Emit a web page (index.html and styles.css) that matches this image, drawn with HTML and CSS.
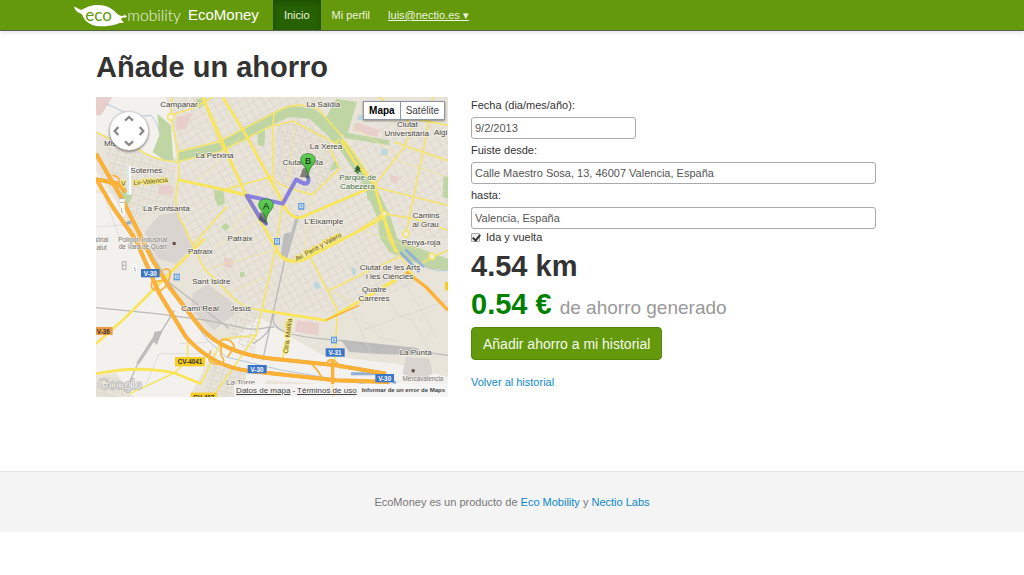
FILE: index.html
```html
<!DOCTYPE html>
<html lang="es">
<head>
<meta charset="utf-8">
<meta name="viewport" content="width=device-width, initial-scale=1">
<title>EcoMoney</title>
<link rel="stylesheet" href="styles.css">
</head>
<body>
<header class="navbar">
  <a class="brand" href="#">
    <svg class="logo" viewBox="0 0 330 84" role="img" aria-label="eco mobility">
      <path class="leaf" d="M0 17C6 17 12 23 22 27C36 20 48 12 72 12C102 12 116 25 128 37C136 45 143 46 151 44L151 49C145 49 141 52 142 57L150 65L137 66C122 73 102 76 78 76C48 74 30 59 25 41C17 35 4 32 0 17Z"/>
      <text class="logo-eco" x="34" y="59">eco</text>
      <text class="logo-mobility" x="160" y="59">mobility</text>
      <path class="logo-dash" d="M146 46H158M152 41V51"/>
    </svg>
    <span>EcoMoney</span>
  </a>
  <nav class="nav">
    <a class="nav-link active" href="#">Inicio</a>
    <a class="nav-link" href="#">Mi perfil</a>
    <a class="nav-link account" href="#">luis@nectio.es ▾</a>
  </nav>
</header>

<main class="container">
  <h1 class="title">Añade un ahorro</h1>
  <div class="columns">
    <section class="map" aria-label="Mapa de la ruta">
      <svg class="map-canvas" viewBox="0 0 1056 900">
        <defs>
          <pattern id="streets" width="44" height="44" patternUnits="userSpaceOnUse" patternTransform="rotate(-30)">
            <path class="street" d="M0 6H44M0 29H44M8 0V44M32 0V44"/>
          </pattern>
          <pattern id="streets-dense" width="25" height="25" patternUnits="userSpaceOnUse" patternTransform="rotate(15)">
            <path class="street" d="M0 4H25M0 16H14M6 0V25M19 0V16"/>
          </pattern>
          <linearGradient id="pin-fill" x1="0" y1="0" x2="0" y2="1">
            <stop offset="0" stop-color="#63cf58"/><stop offset="1" stop-color="#36a82f"/>
          </linearGradient>
          <g id="pin">
            <path class="pin" d="M0 0C-1-28-8-34-16-44C-30-63-17-76 0-76C17-76 30-63 16-44C8-34 1-28 0 0Z"/>
          </g>
          <g id="station">
            <rect class="station" x="-9" y="-10" width="18" height="20"/>
            <path class="station-mark" d="M-5-6H5V4H-5ZM-5-1H5M-4 7L-2 4M4 7L2 4"/>
          </g>
        </defs>
        <rect class="land" width="1056" height="900"/>
        <path class="urban" d="M210 0H1056V840L900 800L680 775L550 700L490 660L400 735L330 720L260 630L200 520L120 410L85 270L0 130V105L110 150L205 190L240 180L225 60Z"/>
        <path class="urban" d="M0 105L150 190L245 200L240 370L290 445L200 520L110 420L60 310L0 220Z"/>
        <path class="urban" d="M340 785L455 815L440 900H280ZM0 835L60 828L110 900H0ZM510 850L660 860V900H500Z"/>
        <path class="street-fill" d="M245 200L380 160L540 70L640 45L730 140L860 350L960 560L720 650L500 640L400 600L290 450L245 340Z"/>
        <path class="street-fill" d="M250 0H710L640 30L540 45L430 115L245 170L225 60ZM750 130L900 70L1056 90V430L920 410L850 320Z"/>
        <path class="street-dense" d="M545 80L610 65L690 120L735 210L650 290L570 270L535 235Z"/>
        <path class="street-dense" d="M20 110L160 180L235 205L240 340L110 360L55 280ZM390 610L500 645L470 790L410 720ZM350 800L450 820L435 900H320ZM0 845L60 835L100 900H0Z"/>
        <path class="industry" d="M190 355L245 345L275 420L290 450L240 500L185 485L145 405ZM335 560L395 605L430 640L355 700L285 640L290 590ZM930 780L1000 785L1010 830L965 855L920 830Z"/>
        <path class="hospital" d="M603 670L670 678L668 715L598 704ZM240 60L290 48L270 95L242 100ZM0 0H50L15 55H0ZM384 480L415 490L405 515L383 508ZM188 265H230V293H188ZM780 75L850 100L845 120L770 100ZM885 235L910 240L900 262L880 250Z"/>
        <path class="water-line" d="M30 20C80 40 100 65 165 55C205 100 180 140 235 190M75 275L100 350L215 550L260 620L330 725L390 780L560 820L830 865"/>
        <path class="park" d="M184 50L225 85L232 190H205L170 165L190 115ZM245 165L370 137L450 87L538 43L580 25L655 35L705 75L745 130L785 190L835 260L880 350L905 425L960 450L1056 485V520L1000 515L940 490L880 465L850 420L845 365L800 260L740 170L690 110L640 65L580 60L515 90L450 128L370 165L245 192Z"/>
        <path class="park" d="M720 5L783 15L752 120L715 100L680 80ZM740 105L880 130V145L745 123ZM355 278L382 282L387 320L365 327L355 300ZM390 377L402 390L388 403L374 390ZM485 105L508 100L505 148L485 145ZM715 190L730 210L700 225ZM1042 240L1056 236V305L1040 300ZM75 280L110 295L95 325L78 320ZM810 270L835 275L840 315L815 310ZM432 525H445V540H432ZM300 5H340L310 35Z"/>
        <path class="pool" d="M650 560L663 553L675 570L660 578ZM765 510L778 512L780 530L770 535ZM785 55H800V70H785ZM855 155H875V175H855Z"/>
        <path class="rail-yard" d="M564 410L585 405L570 480H553ZM735 728L960 752L1000 775L860 772L760 765ZM175 705L200 700L182 745L170 730Z"/>
        <path class="rail-wide" d="M605 355L568 487M180 715L125 800"/>
        <path class="rail" d="M568 480L500 790M0 632L180 650L335 670L450 695C500 700 500 690 535 690M210 550L400 695M535 650C515 700 580 720 730 730L1056 775M470 740Q525 710 526 670M235 640L180 730M125 800L90 880"/>
        <path class="lane" d="M0 285H75M30 310L70 420M0 390L120 380M190 770H355M190 770L150 860M250 740L350 735M880 610L900 650L950 670L1010 780M780 640L850 720L910 735M800 700L1056 610M750 600L830 780M930 560L1020 720"/>
        <path class="road" d="M0 105L40 125M125 155Q170 190 240 195L370 165L520 90L590 72L730 145M228 0L225 60L245 160L250 240Q225 330 260 380L290 445L325 515L420 610Q450 635 500 640L690 670L720 655L890 550L1010 480L1056 460M225 55L300 30L350 0M245 165L370 133L540 45Q600 10 665 35L740 120M450 295L395 275L530 238M245 248L340 268L450 295M290 445L393 328M320 5L375 140L450 295L540 455Q560 510 620 490M380 0L450 112L560 315Q580 365 610 362L840 265M535 50L530 80L532 240Q530 265 650 293L730 215L700 150M740 125L790 190L835 265L880 430L915 480L960 545M560 315L540 450L480 715L350 900M730 125L705 160M850 0L950 85L925 150L835 265M1010 0L990 120L930 410M905 55L1056 85M895 135L1056 190M835 270L1056 325M860 350L955 365L1056 400M640 475L780 405L860 350M640 475L725 640L715 800M700 580L830 515L910 480M0 830Q130 800 235 828L315 860L380 725L480 715M235 828L100 890M275 720V790L235 828M560 785L590 660"/>
        <path class="main-road" d="M245 248L370 275L450 295L540 455Q560 500 620 490L840 375L870 350M380 0L450 115L560 315Q580 370 620 360L840 265L780 200L735 130M320 0L450 295M0 740L80 670L180 570L325 425M835 265L860 350L900 465M500 640L690 670L900 550M0 830Q130 805 235 828L315 860"/>
        <path class="road-thin" d="M430 120L350 215L300 250M520 245L400 405M650 290L620 485M800 400L960 455M700 580L780 620M900 30L1056 25M925 150L1056 195M860 175L1056 240M770 90L900 170M360 450L500 365M320 520L550 455M370 600L510 540M650 100L735 215M600 70L575 260M100 200L80 250L0 282"/>
        <path class="canal" d="M912 465L970 525M928 458L985 510M90 380L105 375M765 830L840 830L900 858"/>
        <path class="water-line" d="M960 490L1000 515Q1030 525 1056 520"/>
        <path class="motorway-edge" d="M0 170L75 300L170 490L220 570L300 675Q370 770 530 785L720 805L870 830M0 245L50 330L120 430L190 590L270 720Q350 810 460 822L720 850L880 855M0 247L65 260L90 285"/>
        <path class="motorway" d="M0 170L75 300L170 490L220 570L300 675Q370 770 530 785L720 805L870 830M0 245L50 330L120 430L190 590L270 720Q350 810 460 822L720 850L880 855M0 247L65 260L90 285M710 900V790"/>
        <path class="junction" d="M200 520Q230 505 220 545Q205 585 185 580Q160 580 168 555L200 550M345 760Q325 800 365 802Q395 800 375 775L375 730Q405 720 415 750L395 780M50 235Q80 240 65 270L40 260M690 800Q710 770 735 815M640 795Q670 820 680 850"/>
        <path class="junction" d="M690 670L790 625"/>
        <path class="motorway" d="M930 525L990 570L1056 640"/>
        <circle class="roundabout" cx="225" cy="60" r="10"/><circle class="roundabout" cx="930" cy="411" r="9"/><circle class="roundabout" cx="865" cy="350" r="7"/><circle class="roundabout" cx="1008" cy="478" r="9"/>
        <path class="route" d="M510 380L490 360L452 296L560 320L600 248L625 260Q642 260 636 240"/>

        <g class="places">
          <text x="249" y="31">Campanar</text><text x="682" y="29">La Saïdia</text>
          <text x="934" y="91">Ciutat</text><text x="932" y="118">Universitària</text><text x="1034" y="113">Algi</text>
          <text x="690" y="157">La Xerea</text><text x="356" y="184">La Petxina</text>
          <text x="620" y="204">Ciutat Vella</text><text x="62" y="146">Mislata</text>
          <text x="151" y="229">Soternes</text><text x="211" y="341">La Fontsanta</text>
          <text x="683" y="380">L'Eixample</text><text x="432" y="433">Patraix</text><text x="313" y="470">Patraix</text>
          <text x="990" y="363">Camins</text><text x="989" y="391">al Grau</text><text x="975" y="444">Penya-roja</text>
          <text x="346" y="561">Sant Isidre</text><text x="312" y="643">Cami Real</text><text x="434" y="643">Jesús</text>
          <text x="882" y="518">Ciutat de les Arts</text><text x="881" y="545">i les Ciències</text>
          <text x="835" y="584">Quatre</text><text x="834" y="612">Carreres</text><text x="959" y="775">La Punta</text>
          <text class="faint" x="434" y="864">La Torre</text>
        </g>
        <g class="places park-name"><text x="785" y="249">Parque de</text><text x="784" y="276">Cabezera</text></g>
        <path class="tree" d="M785 204L776 216H780L774 224H796L790 216H794ZM782 223H788V229H782Z"/>
        <g class="small-places">
          <text x="140" y="434">Polígon Industrial</text><text x="140" y="456">de Vara de Quart</text>
          <text x="17" y="436">strial</text><text x="17" y="458">alut</text><text x="981" y="852">Mercavalencia</text>
        </g>
        <path class="dot" d="M230 435H239V444H230ZM947 817H956V826H947Z"/>
        <g class="road-names">
          <text x="76" y="266">V</text><text transform="translate(113 264) rotate(-5)">Lv-Valencia</text>
          <text transform="translate(602 493) rotate(-29)">Av. Peris y Valero</text>
          <text transform="translate(575 770) rotate(-83)">Ctra. Malilla</text>
        </g>
        <g class="shields">
          <rect x="135" y="516" width="56" height="25"/><text x="163" y="536">V-30</text>
          <rect x="689" y="754" width="57" height="25"/><text x="717" y="774">V-31</text>
          <rect x="455" y="804" width="57" height="25"/><text x="483" y="824">V-30</text>
          <rect x="838" y="831" width="56" height="25"/><text x="866" y="851">V-30</text>
        </g>
        <g class="shields local">
          <rect x="237" y="780" width="90" height="28"/><text x="282" y="802">CV-4041</text>
          <rect x="284" y="887" width="78" height="28"/><text x="323" y="909">CV-407</text>
          <rect x="1047" y="555" width="20" height="25"/>
          <rect class="regional" x="-12" y="690" width="62" height="24"/><text x="22" y="710">V-36</text>
        </g>
        <use href="#station" x="616" y="328"/><use href="#station" x="543" y="433"/><use href="#station" x="242" y="540"/><use href="#station" x="714" y="729"/>
        <path class="pin-shadow" d="M510 380L488 370L492 345L508 352ZM634 242L612 240L620 215L634 210Z"/>
        <use href="#pin" x="510" y="382"/><use href="#pin" x="636" y="246"/>
        <g class="pin-letters"><text x="510" y="337">A</text><text x="636" y="202">B</text></g>
        <path class="control-piece" d="M94 207H105V293H94ZM72 304H86V357L74 350ZM110 500H123V525L112 512Z"/>
        <path class="control-tint" d="M92 207H99V293H92Z"/>
        <path class="control-line" d="M72 305H85M72 316H85M77 332V344L83 349M79 494H90V517H79ZM81 505H88M115 510L119 522"/>
        <text class="google" x="6" y="876">Google</text>
      </svg>

      <div class="pan">
        <svg viewBox="0 0 120 120" aria-hidden="true">
          <circle class="pan-disc" cx="60" cy="60" r="58"/>
          <path class="pan-arrows" d="M48 29L60 18L72 29M48 91L60 102L72 91M28 48L17 60L28 72M92 48L103 60L92 72"/>
        </svg>
      </div>
      <div class="map-types">
        <button class="map-type selected" type="button">Mapa</button>
        <button class="map-type" type="button">Satélite</button>
      </div>
      <div class="map-legal">
        <a href="#">Datos de mapa</a><span>-</span><a href="#">Términos de uso</a>
        <a class="report" href="#">Informar de un error de Maps</a>
      </div>
    </section>

    <form class="trip">
      <label for="date">Fecha (dia/mes/año):</label>
      <input class="field short" id="date" type="text" value="9/2/2013">
      <label for="from">Fuiste desde:</label>
      <input class="field" id="from" type="text" value="Calle Maestro Sosa, 13, 46007 Valencia, España">
      <label for="to">hasta:</label>
      <input class="field" id="to" type="text" value="Valencia, España">
      <div class="check">
        <input class="tick" id="round" type="checkbox" checked>
        <label for="round">Ida y vuelta</label>
      </div>
      <h2 class="figure">4.54 km</h2>
      <h2 class="figure saving">0.54 € <small>de ahorro generado</small></h2>
      <button class="submit" type="button">Añadir ahorro a mi historial</button>
      <a class="link back" href="#">Volver al historial</a>
    </form>
  </div>
</main>

<footer class="footer">
  <p>EcoMoney es un producto de <a class="link" href="#">Eco Mobility</a> y <a class="link" href="#">Nectio Labs</a></p>
</footer>
</body>
</html>
```
FILE: styles.css
```css
* { box-sizing: border-box; }

body {
  margin: 0;
  background: #fff;
  color: #333;
  font: 11px/16px "Liberation Sans", Arial, sans-serif;
}

.navbar {
  display: flex;
  height: 31px;
  padding-left: 74px;
  background: #64990b;
  border-bottom: 1px solid #56624a;
  box-shadow: 0 1px 5px rgba(0, 0, 0, .15);
}

.brand {
  display: flex;
  align-items: center;
  gap: 4px;
  padding-right: 14px;
  color: #fff;
  font-size: 15px;
  text-decoration: none;
}

.logo { width: 110px; height: 28px; }
.leaf { fill: #fff; }
.logo-eco { fill: #64990b; font: 51px Lato, sans-serif; }
.logo-mobility { fill: #f3f8e9; font: 300 47px Lato, sans-serif; }
.logo-dash { stroke: #fff; stroke-width: 4; }

.nav { display: flex; }

.nav-link {
  display: flex;
  align-items: center;
  padding: 0 11px;
  color: #edf4df;
  text-decoration: none;
}

.nav-link.active {
  background: #266203;
  box-shadow: inset 0 2px 6px rgba(0, 0, 0, .25);
}

.account { padding-left: 7px; text-decoration: underline; }

.container {
  max-width: 832px;
  margin: 0 auto;
  padding-top: 18px;
}

.title {
  margin: 0 0 12px;
  font-size: 29px;
  line-height: 36px;
}

.columns {
  display: grid;
  grid-template-columns: 352fr 457fr;
  gap: 23px;
  align-items: start;
}

.map { position: relative; overflow: hidden; }
.map-canvas { display: block; width: 100%; }

.land { fill: #f3f1ed; }
.urban { fill: #e9e4da; }
.street-fill { fill: url(#streets); }
.street-dense { fill: url(#streets-dense); }
.street { fill: none; stroke: #d8d2c8; stroke-width: 2; }
.industry { fill: #d9d4cf; }
.hospital { fill: #e9cfcb; }
.park { fill: #bfd6a4; }
.pool { fill: #bcd8dc; }
.water-line { fill: none; stroke: #b4c8dc; stroke-width: 3; }
.canal { fill: none; stroke: #91b1d3; stroke-width: 9; }
.rail-yard { fill: #bdbdbd; }
.rail-wide { fill: none; stroke: #bdbdbd; stroke-width: 10; }
.rail { fill: none; stroke: #bababa; stroke-width: 4; }
.lane { fill: none; stroke: #d6d3ce; stroke-width: 2; }
.road { fill: none; stroke: #f4e46e; stroke-width: 5; stroke-linejoin: round; }
.road-thin { fill: none; stroke: #f1e68f; stroke-width: 2; }
.main-road { fill: none; stroke: #f8e559; stroke-width: 8; stroke-linejoin: round; }
.motorway-edge { fill: none; stroke: #e9a238; stroke-width: 12; }
.motorway { fill: none; stroke: #fdb235; stroke-width: 10; stroke-linejoin: round; }
.junction { fill: none; stroke: #f8b43e; stroke-width: 5; }
.roundabout { fill: #f2efe6; stroke: #f4e46e; stroke-width: 5; }
.route { fill: none; stroke: #7770df; stroke-opacity: .85; stroke-width: 12; stroke-linejoin: round; stroke-linecap: round; }

.places {
  fill: #444;
  stroke: #f5f2ea;
  stroke-width: 4;
  paint-order: stroke;
  text-anchor: middle;
  font-size: 24px;
}

.faint { fill: #777; }
.park-name { fill: #3f7048; }
.tree { fill: #35603c; }
.small-places { fill: #777; stroke: #f5f2ea; stroke-width: 3; paint-order: stroke; text-anchor: middle; font-size: 19px; }
.dot { fill: #604a42; }
.road-names { fill: #5a5130; stroke: #f8ea7c; stroke-width: 6; paint-order: stroke; font-size: 20px; }
.shields { fill: #3c75c6; text-anchor: middle; font-size: 19px; font-weight: bold; }
.shields text { fill: #fff; }
.local { fill: #f7cd24; }
.local text { fill: #333; }
.shields .regional { fill: #ee9b46; }
.station { fill: #4d91d8; }
.station-mark { fill: none; stroke: #fff; stroke-width: 2; }
.pin { fill: url(#pin-fill); stroke: #256f22; stroke-width: 2; }
.pin-shadow { fill: #333; fill-opacity: .55; }
.pin-letters { fill: #111; text-anchor: middle; font-size: 28px; }
.control-piece { fill: #fff; }
.control-tint { fill: #d6e8f0; }
.control-line { fill: none; stroke: #888; stroke-width: 2; }
.google { fill: #eee; stroke: #999; stroke-width: 3; paint-order: stroke; font: 45px "Liberation Serif", serif; }

.pan { position: absolute; left: 13px; top: 14px; width: 40px; height: 40px; filter: drop-shadow(0 1px 1px rgba(0, 0, 0, .55)); }
.pan svg { display: block; }
.pan-disc { fill: #fff; stroke: #ccc; stroke-width: 2; }
.pan-arrows { fill: none; stroke: #888; stroke-width: 7; }

.map-types {
  position: absolute;
  top: 4px;
  right: 3px;
  display: flex;
  border: 1px solid #8b95a5;
  box-shadow: 0 1px 2px rgba(0, 0, 0, .4);
}

.map-type {
  height: 17px;
  padding: 0 5px;
  border: 0;
  background: #fff;
  color: #444;
  font: 10px/17px "Liberation Sans", Arial, sans-serif;
}

.map-type.selected { border-right: 1px solid #8b95a5; color: #000; font-weight: bold; }

.map-legal {
  position: absolute;
  right: 0;
  bottom: 0;
  display: flex;
  gap: 2px;
  height: 13px;
  padding-left: 2px;
  background: rgba(245, 245, 245, .8);
  font-size: 8px;
  line-height: 13px;
  white-space: nowrap;
}

.map-legal a { color: #444; }
.map-legal .report { padding: 0 3px; background: #f5f5f5; font-size: 6px; font-weight: bold; text-decoration: none; }

.trip { display: flex; flex-direction: column; align-items: flex-start; }

.field {
  width: 405px;
  max-width: 100%;
  height: 22px;
  margin: 4px 0 3px;
  padding: 0 3px;
  border: 1px solid #aaa;
  border-radius: 3px;
  background: #fff;
  color: #555;
  font: 11px/16px "Liberation Sans", Arial, sans-serif;
}

.field.short { width: 165px; }

.check { display: flex; align-items: center; gap: 6px; margin: -3px 0 2px; }

.tick {
  appearance: none;
  width: 9px;
  height: 9px;
  margin: 0;
  border: 1px solid #aaa;
  border-radius: 1px;
  background: #eee;
}

.tick:checked::before {
  content: "";
  display: block;
  width: 3px;
  height: 6px;
  margin: -1px 0 0 2px;
  border: solid #333;
  border-width: 0 2px 2px 0;
  transform: rotate(40deg);
}

.figure { margin: 0; font-size: 29px; line-height: 38px; }
.figure.saving { color: #008000; }
.figure small { color: #999; font-size: 19px; font-weight: normal; }

.submit {
  height: 33px;
  margin: 0 0 14px;
  padding: 0 11px;
  border: 1px solid #568609;
  border-radius: 4px;
  background: #64990b;
  color: #f5f9ee;
  font: 14px/20px "Liberation Sans", Arial, sans-serif;
  white-space: nowrap;
}

.link { color: #0d88cb; text-decoration: none; }

.footer {
  margin-top: 74px;
  padding: 22px 16px;
  border-top: 1px solid #e5e5e5;
  background: #f4f4f4;
  color: #777;
  text-align: center;
}

.footer p { margin: 0; }
```
